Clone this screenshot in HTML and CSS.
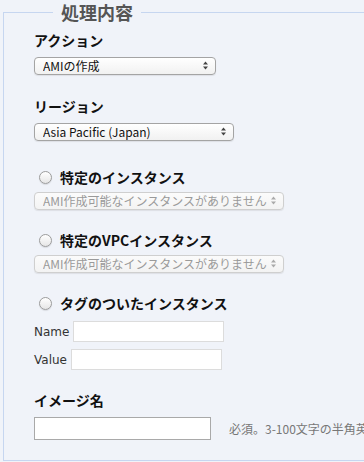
FILE: index.html
```html
<!DOCTYPE html>
<html lang="ja">
<head>
  <meta charset="UTF-8">
  <title>処理内容</title>
  <link rel="stylesheet" href="styles.css">
</head>
<body>

<fieldset class="panel">
  <legend>処理内容</legend>

  <!-- アクション -->
  <div class="field first">
    <div class="field-title">アクション</div>
    <div class="select" style="width: 182px;">
      <select>
        <option>AMIの作成</option>
      </select>
      <svg class="arrows" width="5" height="9" viewBox="0 0 5 9"><path d="M0 3.5L2.5 0.5L5 3.5Z M0 5.5L2.5 8.5L5 5.5Z" fill="#444"/></svg>
    </div>
  </div>

  <!-- リージョン -->
  <div class="field">
    <div class="field-title">リージョン</div>
    <div class="select" style="width: 200px;">
      <select>
        <option>Asia Pacific (Japan)</option>
      </select>
      <svg class="arrows" width="5" height="9" viewBox="0 0 5 9"><path d="M0 3.5L2.5 0.5L5 3.5Z M0 5.5L2.5 8.5L5 5.5Z" fill="#444"/></svg>
    </div>
  </div>

  <!-- 対象 -->
  <div class="field target">
    <label class="radio-row"><input type="radio" name="target"> 特定のインスタンス</label>
    <div class="select disabled" style="width: 250px;">
      <select disabled>
        <option>AMI作成可能なインスタンスがありません</option>
      </select>
      <svg class="arrows" width="5" height="9" viewBox="0 0 5 9"><path d="M0 3.5L2.5 0.5L5 3.5Z M0 5.5L2.5 8.5L5 5.5Z" fill="#aaa"/></svg>
    </div>
  </div>

  <div class="field target">
    <label class="radio-row"><input type="radio" name="target"> 特定のVPCインスタンス</label>
    <div class="select disabled" style="width: 250px;">
      <select disabled>
        <option>AMI作成可能なインスタンスがありません</option>
      </select>
      <svg class="arrows" width="5" height="9" viewBox="0 0 5 9"><path d="M0 3.5L2.5 0.5L5 3.5Z M0 5.5L2.5 8.5L5 5.5Z" fill="#aaa"/></svg>
    </div>
  </div>

  <div class="field target tags">
    <label class="radio-row"><input type="radio" name="target"> タグのついたインスタンス</label>
    <div class="tag-row">
      <span class="tag-label">Name</span>
      <input type="text" class="tag-input">
    </div>
    <div class="tag-row">
      <span class="tag-label">Value</span>
      <input type="text" class="tag-input">
    </div>
  </div>

  <!-- イメージ名 -->
  <div class="field image-name">
    <div class="field-title">イメージ名</div>
    <div class="name-row">
      <input type="text" class="name-input">
      <span class="help">必須。3-100文字の半角英数字</span>
    </div>
  </div>
</fieldset>

</body>
</html>
```

FILE: styles.css
```css
html, body {
  margin: 0;
  background-color: #f0f3f9;
  overflow: hidden;
}

body {
  font-family: "Noto Sans CJK JP", "Noto Sans", sans-serif;
  color: #111;
  width: 364px;
  height: 462px;
}

.panel {
  margin: 0 0 0 3px;
  padding: 0 0 20px 30px;
  border: 1px solid #c6d6f0;
  border-right: none;
  width: 420px;
  min-width: 0;
}

.panel legend {
  margin-left: 19px;
  padding: 0 8px;
  font-size: 18px;
  line-height: 24px;
  font-weight: bold;
  color: #555;
}

.field {
  margin-top: 21px;
}

.field.first {
  margin-top: 6px;
}

.field.target {
  margin-top: 26px;
}

.field.target + .field.target {
  margin-top: 20px;
}

.field.target.tags {
  margin-top: 23px;
}

.field.image-name {
  margin-top: 20px;
}

.field-title {
  font-size: 14px;
  line-height: 20px;
  font-weight: bold;
  margin-bottom: 7px;
}

.select {
  position: relative;
  height: 18px;
}

.select select {
  display: block;
  appearance: none;
  -webkit-appearance: none;
  width: 100%;
  height: 18px;
  margin: 0;
  padding: 0 0 0 8px;
  font-family: inherit;
  font-size: 12px;
  line-height: 16px;
  color: #111;
  border: 1px solid #a4a4a4;
  border-radius: 4px;
  background: linear-gradient(#ffffff, #f1f1f1);
  box-shadow: 0 1px 1px rgba(0, 0, 0, 0.08);
}

.select.disabled select {
  color: #9a9a9a;
  border-color: #cfcfcf;
  background: linear-gradient(#fbfbfb, #f3f3f3);
  opacity: 1;
}

.select .arrows {
  position: absolute;
  right: 8px;
  top: 4px;
}

.radio-row {
  display: flex;
  align-items: center;
  height: 20px;
  padding-left: 5px;
  font-size: 14px;
  font-weight: bold;
  margin-bottom: 5px;
  gap: 8px;
}

.radio-row input {
  appearance: none;
  -webkit-appearance: none;
  margin: 0;
  width: 13px;
  height: 13px;
  border: 1px solid #9c9c9c;
  border-radius: 50%;
  background: linear-gradient(#ffffff, #e6e6e6);
  box-shadow: 0 1px 1px rgba(0, 0, 0, 0.1);
}

.tag-row {
  display: flex;
  align-items: center;
  gap: 4px;
  margin-top: 7px;
}

.tags .radio-row {
  margin-bottom: 8px;
}

.tag-label {
  font-family: "DejaVu Sans", sans-serif;
  font-size: 12px;
  color: #333;
}

.tag-input {
  width: 151px;
  height: 21px;
  box-sizing: border-box;
  margin: 0;
  border: 1px solid #dcdcdc;
  background: #fff;
}

.name-row {
  display: flex;
  align-items: center;
}

.name-input {
  width: 177px;
  height: 23px;
  box-sizing: border-box;
  margin: 0;
  border: 1px solid #a9a9a9;
  background: #fff;
  flex-shrink: 0;
}

.help {
  margin-left: 18px;
  font-size: 12px;
  color: #777;
  white-space: nowrap;
}
```
